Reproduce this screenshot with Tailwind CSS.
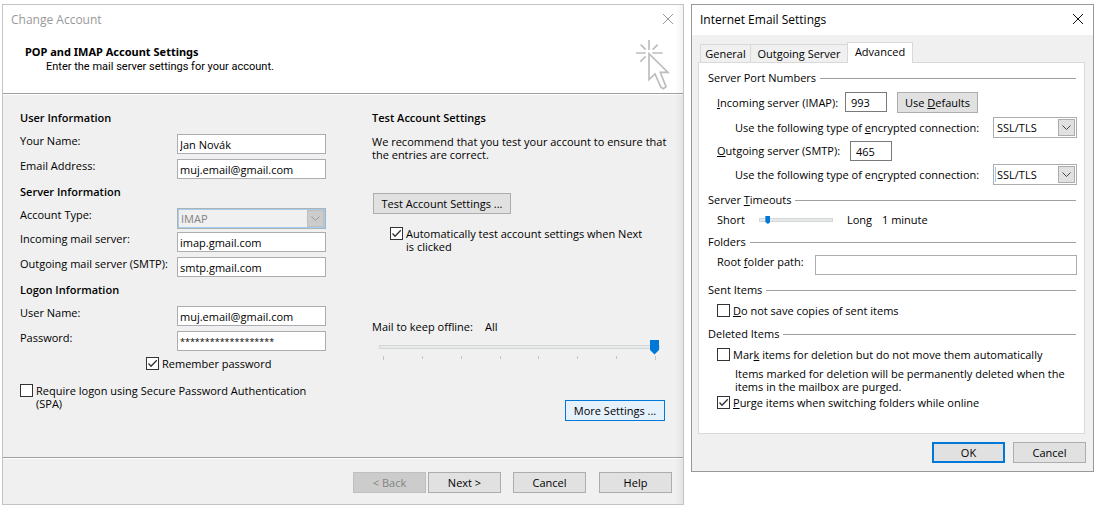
<!DOCTYPE html>
<html lang="en">
<head>
<meta charset="utf-8">
<title>Change Account</title>
<script src="https://cdn.jsdelivr.net/npm/@tailwindcss/browser@4"></script>
</head>
<body class="bg-white font-['Open_Sans',sans-serif] text-[11px] leading-[14px] text-black">
<div class="flex items-start gap-[7px] pt-1 pl-0.5 pr-px">

  <!-- Change Account -->
  <main class="relative min-w-0 flex-1 border border-[#c3c3c3] bg-[#f0f0f0]">
    <header class="flex h-[89px] justify-between border-b border-[#a0a0a0] bg-white pl-2">
      <div>
        <h1 class="pt-[6px] text-[12px] leading-[18px] text-[#999]">Change Account</h1>
        <p class="mt-4 pl-[14px] font-['Noto_Sans',sans-serif] font-bold">POP and IMAP Account Settings</p>
        <p class="mt-px pl-[35px] font-['Roboto',sans-serif]">Enter the mail server settings for your account.</p>
      </div>
      <div class="flex flex-col items-end pr-[10px] pt-[9px]">
        <button aria-label="Close" class="h-[10px] w-[10px]">
          <svg viewBox="0 0 10 10" class="block h-[10px] w-[10px]" fill="none" stroke="#999"><path d="M0 0L10 10M10 0L0 10"/></svg>
        </button>
        <svg viewBox="15 15 105 153" class="mt-[15px] mr-[3px] h-[51px] w-[35px] shrink-0" fill="none" stroke="#bdbdbd" stroke-width="5">
          <path d="M57 18V48M18 57H47M67 57H98M32 32L47 47M83 32L68 47M31 83L47 67"/>
          <path d="M57 59V137L75 120L93 160L100 164L108 158L91 115H114Z"/>
        </svg>
      </div>
    </header>

    <form class="flex min-h-[364px] border-t border-b border-t-white border-b-[#a0a0a0] pl-[17px] pr-[18px] pt-4">
      <div class="w-[306px] shrink-0">
        <h2 class="mb-[9px] font-semibold">User Information</h2>
        <div class="grid grid-cols-[157px_149px] gap-y-[5px]">
          <label for="name">Your Name:</label>
          <input id="name" value="Jan Novák" class="h-5 border border-[#abadb3] bg-white px-[2px]">
          <label for="mail">Email Address:</label>
          <input id="mail" value="muj.email@gmail.com" class="h-5 border border-[#abadb3] bg-white px-[2px]">
        </div>
        <h2 class="mt-[6px] mb-[9px] font-semibold">Server Information</h2>
        <div class="mb-[3px] grid grid-cols-[157px_149px]">
          <label for="type">Account Type:</label>
          <div class="relative">
            <select id="type" disabled class="block h-[21px] w-full appearance-none border border-[#adb2b5] bg-[#f0f0f0] pl-[3px] text-[#838383] opacity-100 inset-ring inset-ring-[#a5cdf0]"><option>IMAP</option></select>
            <span class="pointer-events-none absolute top-[2px] right-[2px] grid h-[17px] w-[17px] place-items-center border border-[#bfbfbf] bg-[#ccc]">
              <svg viewBox="0 0 9 5" class="h-[5px] w-[9px]" fill="none" stroke="#999"><path d="M0.5 0.5L4.5 4.5L8.5 0.5"/></svg>
            </span>
          </div>
        </div>
        <div class="grid grid-cols-[157px_149px] gap-y-[5px]">
          <label for="in">Incoming mail server:</label>
          <input id="in" value="imap.gmail.com" class="h-5 border border-[#abadb3] bg-white px-[2px]">
          <label for="out">Outgoing mail server (SMTP):</label>
          <input id="out" value="smtp.gmail.com" class="h-5 border border-[#abadb3] bg-white px-[2px]">
        </div>
        <h2 class="mt-[6px] mb-[9px] font-semibold">Logon Information</h2>
        <div class="grid grid-cols-[157px_149px] gap-y-[5px]">
          <label for="user">User Name:</label>
          <input id="user" value="muj.email@gmail.com" class="h-5 border border-[#abadb3] bg-white px-[2px]">
          <label for="pass">Password:</label>
          <input id="pass" value="*******************" class="h-5 border border-[#abadb3] bg-white px-[2px] text-[9px]">
        </div>
        <label class="mt-[6px] flex gap-[3px] pl-[126px] leading-[13px]">
          <span class="relative h-[13px] w-[13px]">
            <input type="checkbox" checked class="block h-[13px] w-[13px] appearance-none border border-[#333] bg-white">
            <svg viewBox="0 0 13 13" class="pointer-events-none absolute inset-0 h-[13px] w-[13px]" fill="none" stroke="#333" stroke-width="1.3"><path d="M2.5 6.5L5 9.2L10.8 3.2"/></svg>
          </span>
          <span>Remember password</span>
        </label>
        <label class="mt-[14px] flex gap-[3px] leading-[13px]">
          <input type="checkbox" class="block h-[13px] w-[13px] shrink-0 appearance-none border border-[#333] bg-white">
          <span>Require logon using Secure Password Authentication<br>(SPA)</span>
        </label>
      </div>

      <div class="ml-[46px] flex min-w-0 flex-1 flex-col items-start">
        <h2 class="mb-[10px] font-semibold">Test Account Settings</h2>
        <p class="whitespace-nowrap leading-[13px]">We recommend that you test your account to ensure that<br>the entries are correct.</p>
        <button type="button" class="mt-8 ml-px h-[21px] w-[138px] border border-[#adadad] bg-[#e1e1e1]">Test Account Settings ...</button>
        <label class="mt-[13px] flex gap-[3px] pl-[18px] leading-[13px]">
          <span class="relative h-[13px] w-[13px] shrink-0">
            <input type="checkbox" checked class="block h-[13px] w-[13px] appearance-none border border-[#333] bg-white">
            <svg viewBox="0 0 13 13" class="pointer-events-none absolute inset-0 h-[13px] w-[13px]" fill="none" stroke="#333" stroke-width="1.3"><path d="M2.5 6.5L5 9.2L10.8 3.2"/></svg>
          </span>
          <span>Automatically test account settings when Next<br>is clicked</span>
        </label>
        <label for="offline" class="mt-[67px] flex gap-3"><span>Mail to keep offline:</span><span>All</span></label>
        <div class="mt-[5px] ml-[7px] w-[281px]">
          <input id="offline" type="range" min="0" max="7" value="7" class="block h-[15px] w-full appearance-none bg-transparent [&::-webkit-slider-runnable-track]:h-1 [&::-webkit-slider-runnable-track]:border [&::-webkit-slider-runnable-track]:border-[#d6d6d6] [&::-webkit-slider-runnable-track]:bg-[#e7eaea] [&::-webkit-slider-thumb]:-mt-[6px] [&::-webkit-slider-thumb]:h-[15px] [&::-webkit-slider-thumb]:w-[9px] [&::-webkit-slider-thumb]:appearance-none [&::-webkit-slider-thumb]:bg-[#0078d7] [&::-webkit-slider-thumb]:[clip-path:polygon(0_0,100%_0,100%_70%,50%_100%,0_70%)]">
          <div class="mt-[2px] flex justify-between px-1">
            <i class="h-1 w-px bg-[#c4c4c4]"></i><i class="h-[3px] w-px bg-[#c4c4c4]"></i><i class="h-[3px] w-px bg-[#c4c4c4]"></i><i class="h-[3px] w-px bg-[#c4c4c4]"></i><i class="h-[3px] w-px bg-[#c4c4c4]"></i><i class="h-[3px] w-px bg-[#c4c4c4]"></i><i class="h-[3px] w-px bg-[#c4c4c4]"></i><i class="h-1 w-px bg-[#c4c4c4]"></i>
          </div>
        </div>
        <button type="button" class="mt-10 h-[21px] w-[100px] self-end border border-[#0078d7] bg-[#e5f1fb]">More Settings ...</button>
      </div>
    </form>

    <footer class="flex justify-end border-t border-white pt-[13px] pr-[11px] pb-[11px]">
      <button disabled class="mr-[2px] h-[21px] w-[73px] border border-[#bfbfbf] bg-[#ccc] text-[#838383]">&lt; Back</button>
      <button class="mr-3 h-[21px] w-[73px] border border-[#adadad] bg-[#e1e1e1]">Next &gt;</button>
      <button class="mr-[13px] h-[21px] w-[73px] border border-[#adadad] bg-[#e1e1e1]">Cancel</button>
      <button class="h-[21px] w-[73px] border border-[#adadad] bg-[#e1e1e1]">Help</button>
    </footer>
    <div class="pointer-events-none absolute inset-y-0 right-0 w-2 bg-linear-to-r from-black/0 to-black/5"></div>
  </main>

  <!-- Internet Email Settings -->
  <section class="w-[403px] shrink-0 border border-[#999] bg-[#f0f0f0]">
    <header class="flex h-[30px] items-start justify-between bg-white pl-2 pr-[10px]">
      <h1 class="pt-[6px] text-[12px] leading-[18px]">Internet Email Settings</h1>
      <button aria-label="Close" class="mt-[9px] h-[10px] w-[10px]">
        <svg viewBox="0 0 10 10" class="block h-[10px] w-[10px]" fill="none" stroke="#111"><path d="M0 0L10 10M10 0L0 10"/></svg>
      </button>
    </header>

    <div class="px-[6px] pt-[7px]">
      <nav class="flex items-end pl-[2px]" role="tablist">
        <button role="tab" class="h-[18px] w-[51px] border border-b-0 border-[#d9d9d9] text-center">General</button>
        <button role="tab" class="h-[18px] w-[96px] border-t border-[#d9d9d9] text-center">Outgoing Server</button>
        <button role="tab" aria-selected="true" class="relative -mb-px h-[21px] w-[66px] border border-b-0 border-[#d9d9d9] bg-white pb-[2px] text-center">Advanced</button>
      </nav>
      <form class="mr-[2px] min-h-[372px] border border-[#d9d9d9] bg-white pl-[9px] pr-[7px] pt-2">
        <h2 class="flex items-center gap-1">Server Port Numbers<span class="mr-px h-px flex-1 bg-[#a0a0a0]"></span></h2>
        <div class="mt-[7px] flex h-[21px] items-center pl-[9px]">
          <label for="p1" class="w-[128px]"><u>I</u>ncoming server (IMAP):</label>
          <input id="p1" value="993" class="mb-px h-5 w-[42px] border border-[#7a7a7a] px-[5px]">
          <button type="button" class="ml-[10px] h-[21px] w-[81px] border border-[#adadad] bg-[#e1e1e1]">Use <u>D</u>efaults</button>
        </div>
        <div class="mt-1 flex items-center justify-between pl-[27px]">
          <label for="e1">Use the following type of <u>e</u>ncrypted connection:</label>
          <div class="relative w-[84px]">
            <select id="e1" class="block h-[21px] w-full appearance-none border border-[#abadb3] bg-white pl-[3px]"><option>SSL/TLS</option></select>
            <span class="pointer-events-none absolute top-[2px] right-[2px] grid h-[17px] w-[17px] place-items-center border border-[#adadad] bg-[#e1e1e1]">
              <svg viewBox="0 0 9 5" class="h-[5px] w-[9px]" fill="none" stroke="#444"><path d="M0.5 0.5L4.5 4.5L8.5 0.5"/></svg>
            </span>
          </div>
        </div>
        <div class="mt-[3px] flex items-center pl-[9px]">
          <label for="p2" class="w-[133px]"><u>O</u>utgoing server (SMTP):</label>
          <input id="p2" value="465" class="h-5 w-[42px] border border-[#7a7a7a] px-[5px]">
        </div>
        <div class="mt-[3px] flex items-center justify-between pl-[27px]">
          <label for="e2">Use the following type of en<u>c</u>rypted connection:</label>
          <div class="relative w-[84px]">
            <select id="e2" class="block h-[21px] w-full appearance-none border border-[#abadb3] bg-white pl-[3px]"><option>SSL/TLS</option></select>
            <span class="pointer-events-none absolute top-[3px] left-[2px] h-[15px] w-px bg-[#99c9ef]"></span>
            <span class="pointer-events-none absolute top-[2px] right-[2px] grid h-[17px] w-[17px] place-items-center border border-[#adadad] bg-[#e1e1e1]">
              <svg viewBox="0 0 9 5" class="h-[5px] w-[9px]" fill="none" stroke="#444"><path d="M0.5 0.5L4.5 4.5L8.5 0.5"/></svg>
            </span>
          </div>
        </div>
        <h2 class="mt-2 flex items-center gap-1"><label for="to">Server <u>T</u>imeouts</label><span class="mr-px h-px flex-1 bg-[#a0a0a0]"></span></h2>
        <div class="mt-[6px] flex items-center pl-[9px]">
          <span class="w-[42px]">Short</span>
          <input id="to" type="range" min="0" max="100" value="8" class="block h-[8px] w-[74px] appearance-none bg-transparent [&::-webkit-slider-runnable-track]:h-1 [&::-webkit-slider-runnable-track]:border [&::-webkit-slider-runnable-track]:border-[#d6d6d6] [&::-webkit-slider-runnable-track]:bg-[#e7eaea] [&::-webkit-slider-thumb]:-mt-[3px] [&::-webkit-slider-thumb]:h-[8px] [&::-webkit-slider-thumb]:w-[5px] [&::-webkit-slider-thumb]:appearance-none [&::-webkit-slider-thumb]:bg-[#0078d7] [&::-webkit-slider-thumb]:[clip-path:polygon(0_0,100%_0,100%_75%,50%_100%,0_75%)]">
          <span class="ml-[14px] w-[35px]">Long</span>
          <span>1 minute</span>
        </div>
        <h2 class="mt-2 flex items-center gap-1">Folders<span class="mr-px h-px flex-1 bg-[#a0a0a0]"></span></h2>
        <div class="mt-[6px] flex pl-[9px]">
          <label for="root" class="w-[98px]">Root <u>f</u>older path:</label>
          <input id="root" class="h-5 min-w-0 flex-1 border border-[#abadb3] px-[2px]">
        </div>
        <h2 class="mt-2 flex items-center gap-1">Sent Items<span class="mr-px h-px flex-1 bg-[#a0a0a0]"></span></h2>
        <label class="mt-[7px] flex gap-[3px] pl-[9px] leading-[13px]">
          <input type="checkbox" class="block h-[13px] w-[13px] appearance-none border border-[#333] bg-white">
          <span><u>D</u>o not save copies of sent items</span>
        </label>
        <h2 class="mt-[10px] flex items-center gap-1">Deleted Items<span class="mr-px h-px flex-1 bg-[#a0a0a0]"></span></h2>
        <label class="mt-[7px] flex gap-[3px] pl-[9px] leading-[13px]">
          <input type="checkbox" class="block h-[13px] w-[13px] appearance-none border border-[#333] bg-white">
          <span>Mar<u>k</u> items for deletion but do not move them automatically</span>
        </label>
        <p class="mt-[6px] pl-[27px] leading-[13px]">Items marked for deletion will be permanently deleted when the<br>items in the mailbox are purged.</p>
        <label class="mt-[3px] flex gap-[3px] pl-[9px] leading-[13px]">
          <span class="relative h-[13px] w-[13px]">
            <input type="checkbox" checked class="block h-[13px] w-[13px] appearance-none border border-[#333] bg-white">
            <svg viewBox="0 0 13 13" class="pointer-events-none absolute inset-0 h-[13px] w-[13px]" fill="none" stroke="#333" stroke-width="1.3"><path d="M2.5 6.5L5 9.2L10.8 3.2"/></svg>
          </span>
          <span><u>P</u>urge items when switching folders while online</span>
        </label>
      </form>
    </div>
    <footer class="flex justify-end gap-2 px-[7px] pt-2 pb-2">
      <button class="h-[21px] w-[73px] border-2 border-[#0078d7] bg-[#e1e1e1]">OK</button>
      <button class="h-[21px] w-[73px] border border-[#adadad] bg-[#e1e1e1]">Cancel</button>
    </footer>
  </section>
</div>
</body>
</html>
